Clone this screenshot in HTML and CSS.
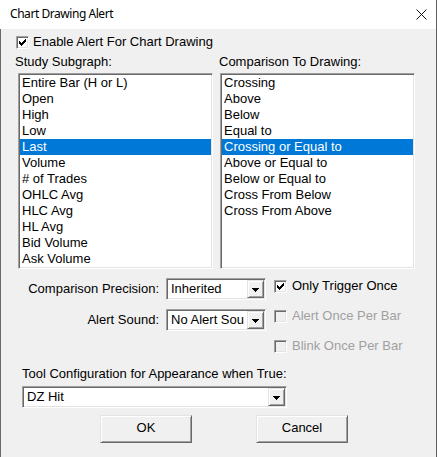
FILE: index.html
```html
<!DOCTYPE html>
<html lang="en">
<head>
<meta charset="utf-8">
<title>Chart Drawing Alert</title>
<link rel="stylesheet" href="styles.css">
</head>
<body>
<div class="window">
  <div class="titlebar">
    <span class="title">Chart Drawing Alert</span>
    <svg class="close" width="11" height="11" viewBox="0 0 11 11"><path d="M0.5 0.5 L10.5 10.5 M10.5 0.5 L0.5 10.5" stroke="#111" stroke-width="1" fill="none"/></svg>
  </div>
  <div class="dialog">
    <div class="check enable">
      <span class="box"><svg width="11" height="11" viewBox="1 1 11 11"><path d="M3 5h1v1h1v1h1v-1h1v-1h1v-1h1v-1h1v3h-1v1h-1v1h-1v1h-1v1h-1v-1h-1v-1h-1z" fill="#000"/></svg></span>
      <span class="check-text">Enable Alert For Chart Drawing</span>
    </div>

    <div class="lists">
      <div class="col col-left">
        <div class="caption">Study Subgraph:</div>
        <ul class="listbox">
          <li>Entire Bar (H or L)</li>
          <li>Open</li>
          <li>High</li>
          <li>Low</li>
          <li class="selected">Last</li>
          <li>Volume</li>
          <li># of Trades</li>
          <li>OHLC Avg</li>
          <li>HLC Avg</li>
          <li>HL Avg</li>
          <li>Bid Volume</li>
          <li>Ask Volume</li>
        </ul>
      </div>
      <div class="col col-right">
        <div class="caption">Comparison To Drawing:</div>
        <ul class="listbox">
          <li>Crossing</li>
          <li>Above</li>
          <li>Below</li>
          <li>Equal to</li>
          <li class="selected">Crossing or Equal to</li>
          <li>Above or Equal to</li>
          <li>Below or Equal to</li>
          <li>Cross From Below</li>
          <li>Cross From Above</li>
        </ul>
      </div>
    </div>

    <div class="options">
      <div class="fields">
        <span class="label">Comparison Precision:</span>
        <div class="combo">
          <span class="value">Inherited</span>
          <span class="drop"><svg width="7" height="4" viewBox="0 0 7 4" shape-rendering="crispEdges"><path d="M0 0h7v1h-1v1h-1v1h-1v1h-1v-1h-1v-1h-1v-1h-1z" fill="#000"/></svg></span>
        </div>
        <span class="label">Alert Sound:</span>
        <div class="combo">
          <span class="value">No Alert Sou</span>
          <span class="drop"><svg width="7" height="4" viewBox="0 0 7 4" shape-rendering="crispEdges"><path d="M0 0h7v1h-1v1h-1v1h-1v1h-1v-1h-1v-1h-1v-1h-1z" fill="#000"/></svg></span>
        </div>
      </div>
      <div class="checks">
        <div class="check">
          <span class="box"><svg width="11" height="11" viewBox="1 1 11 11"><path d="M3 5h1v1h1v1h1v-1h1v-1h1v-1h1v-1h1v3h-1v1h-1v1h-1v1h-1v1h-1v-1h-1v-1h-1z" fill="#000"/></svg></span>
          <span class="check-text">Only Trigger Once</span>
        </div>
        <div class="check disabled">
          <span class="box"></span>
          <span class="check-text">Alert Once Per Bar</span>
        </div>
        <div class="check disabled">
          <span class="box"></span>
          <span class="check-text">Blink Once Per Bar</span>
        </div>
      </div>
    </div>

    <div class="tool-label">Tool Configuration for Appearance when True:</div>
    <div class="combo wide">
      <span class="value">DZ Hit</span>
      <span class="drop"><svg width="7" height="4" viewBox="0 0 7 4" shape-rendering="crispEdges"><path d="M0 0h7v1h-1v1h-1v1h-1v1h-1v-1h-1v-1h-1v-1h-1z" fill="#000"/></svg></span>
    </div>

    <div class="buttons">
      <button class="btn" type="button">OK</button>
      <button class="btn" type="button">Cancel</button>
    </div>
  </div>
</div>
</body>
</html>
```

FILE: styles.css
```css
* {
  box-sizing: border-box;
}

html, body {
  margin: 0;
  padding: 0;
}

body {
  width: 437px;
  height: 457px;
  overflow: hidden;
  background: #f0f0f0;
  font-family: "Liberation Sans", Arial, sans-serif;
  font-size: 13px;
  color: #000;
}

.window {
  width: 437px;
  height: 457px;
  border-right: 1px solid #5f5f5f;
  display: flex;
  flex-direction: column;
}

/* ---------- title bar ---------- */
.titlebar {
  flex: none;
  height: 29px;
  background: #fff;
  display: flex;
  justify-content: space-between;
  align-items: flex-start;
  padding-left: 10px;
}

.title {
  font-family: "Noto Sans", "Open Sans", sans-serif;
  font-size: 12px;
  letter-spacing: -0.45px;
  line-height: 27px;
  color: #000;
}

.close {
  margin: 9px 9px 0 0;
}

/* ---------- dialog body ---------- */
.dialog {
  flex: 1;
  background: #f0f0f0;
  box-shadow: inset 1px 0 #6b6b6b;
  padding-top: 5px;
  line-height: 16px;
}

/* shared 3D edges */
.box,
.listbox,
.combo {
  border: 1px solid;
  border-color: #a0a0a0 #fff #fff #a0a0a0;
  box-shadow: inset 1px 1px #696969, inset -1px -1px #e3e3e3;
}

.drop,
.btn {
  border: 1px solid;
  border-color: #e3e3e3 #696969 #696969 #e3e3e3;
  box-shadow: inset 1px 1px #fff, inset -1px -1px #a0a0a0;
  background: #f0f0f0;
}

/* ---------- checkboxes ---------- */
.check {
  display: flex;
  align-items: center;
  height: 16px;
  white-space: nowrap;
}

.box {
  flex: none;
  width: 13px;
  height: 13px;
  background: #fff;
  display: flex;
}

.box svg {
  display: block;
}

.enable {
  margin-left: 16px;
  gap: 4px;
}

.check.disabled .box {
  background: #f0f0f0;
}

.check.disabled .check-text {
  color: #a0a0a0;
}

/* ---------- list boxes ---------- */
.lists {
  display: flex;
  margin-top: 4px;
  padding-left: 16px;
  gap: 7px;
}

.col {
  width: 197px;
}

.col-right {
  width: 195px;
}

.caption {
  height: 16px;
  margin-left: -1px;
  margin-bottom: 3px;
}

.listbox {
  list-style: none;
  margin: 0;
  padding: 1px;
  width: 195px;
  height: 196px;
  background: #fff;
  overflow: hidden;
}

.col-left .listbox {
  margin-left: 2px;
}

.listbox li {
  height: 16px;
  line-height: 16px;
  padding-left: 2px;
  white-space: nowrap;
}

.listbox li.selected {
  background: #0078d7;
  color: #fff;
}

/* ---------- options ---------- */
.options {
  display: flex;
  margin-top: 9px;
  gap: 8px;
}

.fields {
  display: grid;
  grid-template-columns: 159px 100px;
  grid-auto-rows: 22px;
  column-gap: 7px;
  row-gap: 9px;
}

.label {
  text-align: right;
  align-self: center;
  white-space: nowrap;
}

.combo {
  display: flex;
  height: 22px;
  padding: 1px;
  background: #fff;
}

.combo .value {
  flex: 1;
  min-width: 0;
  white-space: nowrap;
  padding-left: 3px;
  line-height: 18px;
}

.combo .drop {
  flex: none;
  width: 17px;
  height: 18px;
  display: flex;
  align-items: center;
  justify-content: center;
}

.drop svg {
  display: block;
  margin-top: 1px;
}

.checks {
  display: flex;
  flex-direction: column;
  gap: 14px;
}

.checks .check {
  gap: 5px;
}

/* ---------- tool configuration ---------- */
.tool-label {
  margin: 12px 0 0 22px;
  height: 16px;
  white-space: nowrap;
}

.combo.wide {
  margin: 4px 0 0 22px;
  width: 265px;
}

/* ---------- buttons ---------- */
.buttons {
  display: flex;
  gap: 64px;
  margin-top: 7px;
  padding-left: 100px;
}

.btn {
  width: 92px;
  height: 28px;
  padding: 0 0 3px 0;
  font-family: "Liberation Sans", Arial, sans-serif;
  font-size: 13px;
  color: #000;
  border-radius: 0;
  margin: 0;
}
```
